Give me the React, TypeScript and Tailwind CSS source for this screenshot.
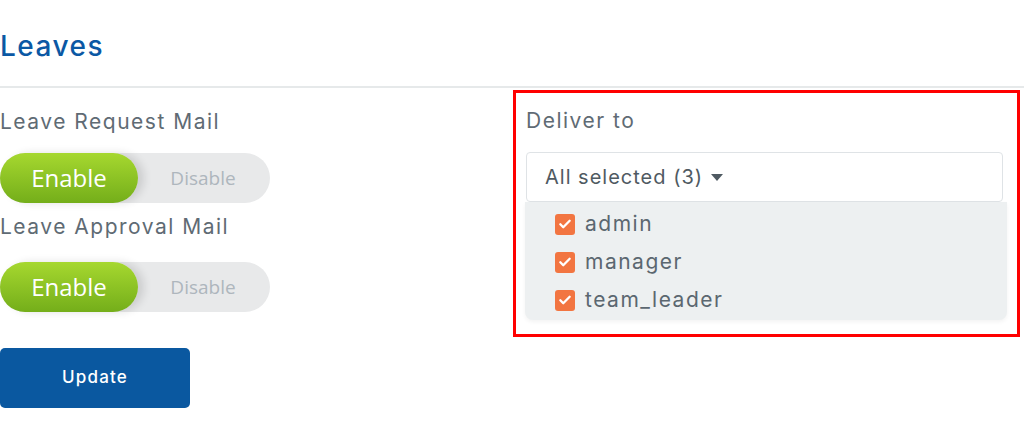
import React from "react";

function Toggle() {
  return (
    <div className="relative w-[270px] h-[50px] rounded-full bg-[#e8e9ea] flex items-center">
      <div className="h-[50px] w-[138px] rounded-full bg-gradient-to-b from-[#a6d82f] to-[#74ae1a] shadow-[6px_0_8px_rgba(0,0,0,0.12)] flex items-center justify-center text-white text-[24px] font-['Open_Sans',sans-serif]">
        Enable
      </div>
      <div className="flex-1 flex items-center justify-center text-[#aeb6bd] text-[19px] font-['Open_Sans',sans-serif] pr-[2px]">
        Disable
      </div>
    </div>
  );
}

function Check({ label }: { label: string }) {
  return (
    <div className="flex items-center h-[38px] pl-[30px]">
      <span className="w-[20px] h-[21px] rounded-[3px] bg-[#f27541] flex items-center justify-center">
        <svg width="14" height="14" viewBox="0 0 24 24" fill="none" stroke="white" strokeWidth="4" strokeLinecap="round" strokeLinejoin="round">
          <path d="M4 12.5l5 5L20 6.5" />
        </svg>
      </span>
      <span className="ml-[10px] text-[21px] tracking-[1.5px] text-[#5b6770]">{label}</span>
    </div>
  );
}

export default function App() {
  return (
    <div className="w-[1024px] h-[431px] bg-white overflow-hidden font-['Inter',sans-serif]">
      <div className="h-[86px] pt-[29px]">
        <h2 className="text-[28px] leading-[34px] tracking-[1.5px] text-[#0b58a4] font-medium">Leaves</h2>
      </div>
      <div className="h-[2px] bg-[#e6e9ea]" />
      <div className="grid grid-cols-2">
        <div className="pt-[20px]">
          <div className="text-[21px] leading-[28px] tracking-[1.5px] text-[#5f6b74]">Leave Request Mail</div>
          <div className="mt-[17px]">
            <Toggle />
          </div>
          <div className="text-[21px] leading-[28px] tracking-[1.5px] text-[#5f6b74] mt-[10px]">Leave Approval Mail</div>
          <div className="mt-[21px]">
            <Toggle />
          </div>
          <button className="mt-[36px] w-[190px] h-[60px] rounded-[5px] bg-[#0a58a0] text-white text-[17px] tracking-[1.2px] font-medium">
            Update
          </button>
        </div>
        <div className="pl-[1px]">
          <div className="mt-[2px] w-[507px] h-[247px] border-[3px] border-[#ff0000] pl-[10px] pr-[14px] pt-[14px]">
            <div className="text-[21px] leading-[28px] tracking-[1.5px] text-[#5f6b74]">Deliver to</div>
            <div className="mt-[17px] h-[50px] border border-[#dfe3e6] rounded-[4px] flex items-center pl-[18px] text-[20px] tracking-[1px] text-[#4f5a62]">
              All selected (3)
              <svg className="ml-[8px]" width="12" height="7" viewBox="0 0 12 7">
                <path d="M0 0h12L6 7z" fill="#4f5a62" />
              </svg>
            </div>
            <div className="-ml-[1px] -mr-[4px] h-[118px] bg-[#edf0f1] rounded-b-[8px] shadow-[0_2px_4px_rgba(0,0,0,0.05)] pt-[3px]">
              <Check label="admin" />
              <Check label="manager" />
              <Check label="team_leader" />
            </div>
          </div>
        </div>
      </div>
    </div>
  );
}
